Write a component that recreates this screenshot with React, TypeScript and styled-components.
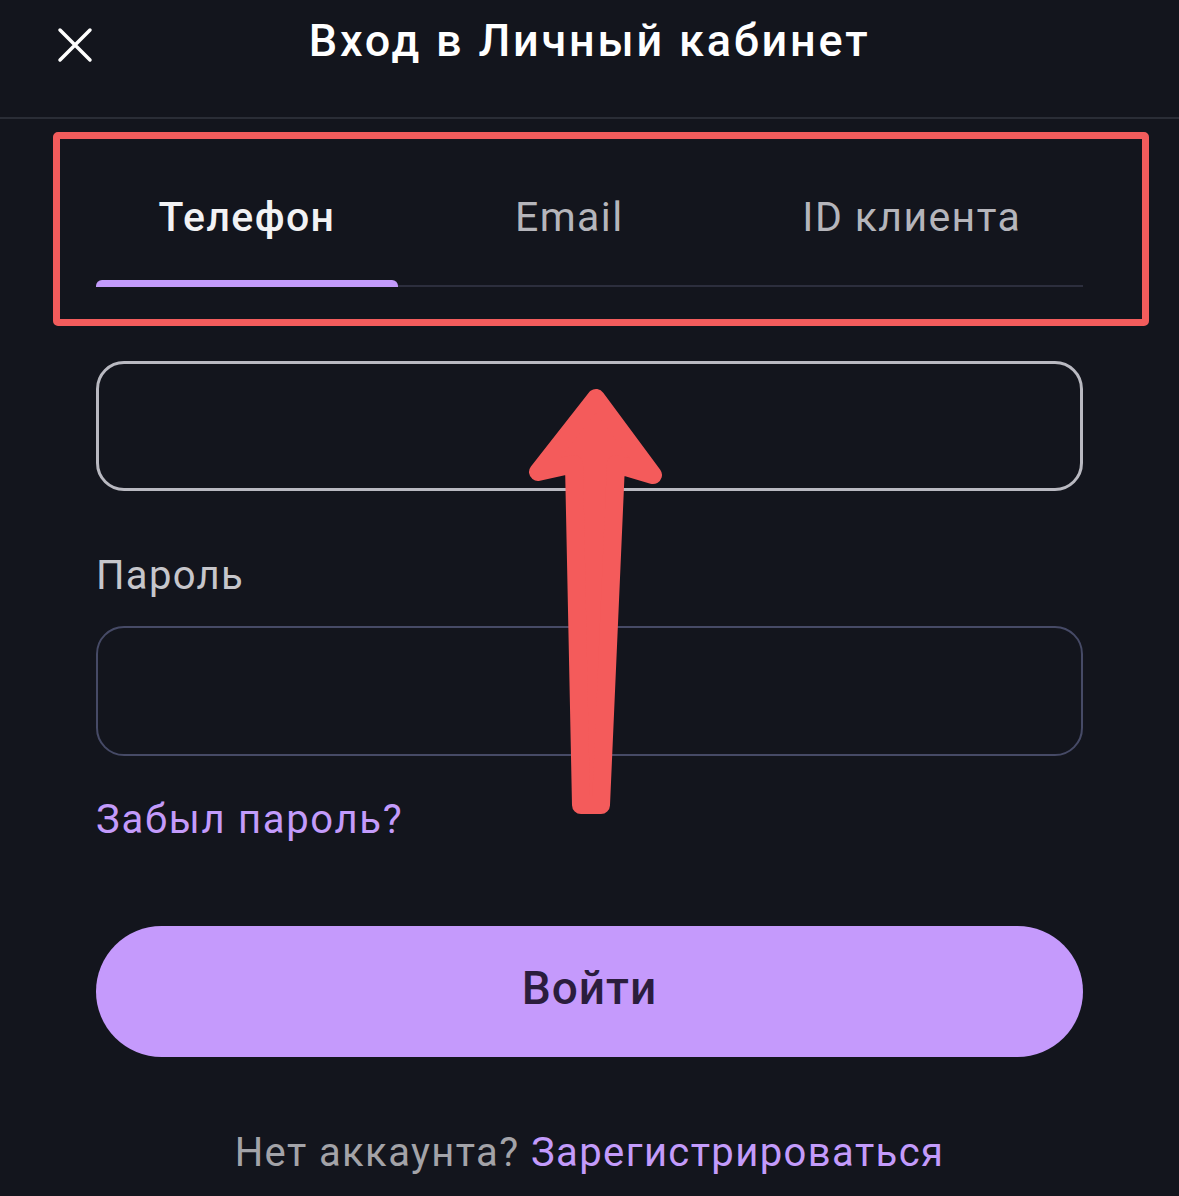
import styled, { createGlobalStyle } from 'styled-components';

const GlobalStyle = createGlobalStyle`
  html, body {
    margin: 0;
    padding: 0;
    background: #13151d;
  }
  * {
    box-sizing: border-box;
  }
`;

const Page = styled.div`
  position: relative;
  width: 1179px;
  height: 1196px;
  overflow: hidden;
  background: #13151d;
  font-family: Roboto, "Noto Sans", sans-serif;
  display: flex;
  flex-direction: column;
`;

const Header = styled.header`
  position: relative;
  height: 119px;
  border-bottom: 2px solid #2a2d36;
  display: flex;
  align-items: flex-start;
  justify-content: center;
  padding-top: 14px;
`;

const CloseButton = styled.button`
  position: absolute;
  left: 52px;
  top: 22px;
  width: 46px;
  height: 46px;
  padding: 0;
  border: none;
  background: transparent;
  display: flex;
  align-items: center;
  justify-content: center;
`;

const Title = styled.h1`
  margin: 0;
  color: #ffffff;
  font-size: 45px;
  line-height: 54px;
  font-weight: 500;
  letter-spacing: 2.8px;
`;

const Highlight = styled.div`
  margin: 13px 30px 0 53px;
  border: 7px solid #f25c5c;
  border-radius: 5px;
  padding: 0 59px 32px 36px;
`;

const TabRow = styled.div`
  display: flex;
  border-bottom: 2px solid #2c2e3d;
`;

const Tab = styled.button<{ active?: boolean; width?: number }>`
  position: relative;
  flex: ${(p) => (p.width ? `0 0 ${p.width}px` : '1 1 0')};
  height: 146px;
  padding: 10px 0 0;
  border: none;
  background: transparent;
  font-family: inherit;
  font-size: 41px;
  line-height: 50px;
  letter-spacing: 1.4px;
  font-weight: ${(p) => (p.active ? 500 : 400)};
  color: ${(p) => (p.active ? '#f2f2f4' : '#b5b5bb')};

  &::after {
    content: '';
    display: ${(p) => (p.active ? 'block' : 'none')};
    position: absolute;
    left: 0;
    right: 0;
    bottom: -2px;
    height: 7px;
    border-radius: 6px 6px 0 0;
    background: #c39bfb;
  }
`;

const Form = styled.div`
  display: flex;
  flex-direction: column;
  padding: 0 96px;
`;

const Field = styled.div<{ focused?: boolean; gap: number }>`
  margin-top: ${(p) => p.gap}px;
  height: 130px;
  border-radius: 28px;
  border: ${(p) => (p.focused ? '3px solid #b9b9c1' : '2.5px solid #464a66')};
`;

const Label = styled.div<{ gap: number }>`
  margin-top: ${(p) => p.gap}px;
  color: #c6c6cb;
  font-size: 40px;
  line-height: 50px;
  letter-spacing: 1.3px;
`;

const Link = styled.a`
  margin-top: 39px;
  color: #c39bfb;
  font-size: 40px;
  line-height: 50px;
  letter-spacing: 1.7px;
  text-decoration: none;
`;

const SubmitButton = styled.button`
  margin-top: 81px;
  height: 131px;
  padding-bottom: 8px;
  border: none;
  border-radius: 66px;
  background: #c59afc;
  color: #2b1d3d;
  font-family: inherit;
  font-size: 46px;
  font-weight: 500;
  letter-spacing: 1px;
`;

const Footer = styled.div`
  margin-top: 71px;
  text-align: center;
  font-size: 40px;
  line-height: 50px;
  letter-spacing: 1.4px;
  color: #a3a3a8;

  span {
    color: #c39bfb;
  }
`;

const ArrowMark = styled.svg`
  position: absolute;
  left: 520px;
  top: 380px;
`;

export default function App() {
  return (
    <Page>
      <GlobalStyle />
      <Header>
        <CloseButton aria-label="Закрыть">
          <svg width="36" height="36" viewBox="0 0 36 36">
            <path d="M3 3 L33 33 M33 3 L3 33" stroke="#ffffff" strokeWidth="3.5" strokeLinecap="round" />
          </svg>
        </CloseButton>
        <Title>Вход в Личный кабинет</Title>
      </Header>

      <Highlight>
        <TabRow>
          <Tab active width={302}>Телефон</Tab>
          <Tab>Email</Tab>
          <Tab>ID клиента</Tab>
        </TabRow>
      </Highlight>

      <Form>
        <Field focused gap={35} />
        <Label gap={60}>Пароль</Label>
        <Field gap={25} />
        <Link>Забыл пароль?</Link>
        <SubmitButton>Войти</SubmitButton>
        <Footer>
          Нет аккаунта? <span>Зарегистрироваться</span>
        </Footer>
      </Form>

      <ArrowMark width="150" height="450" viewBox="0 0 150 450">
        <path
          d="M76 18 L18 92 L54 84 L61 425 L81 425 L96 84 L133 95 Z"
          fill="#f45b5b"
          stroke="#f45b5b"
          strokeWidth="18"
          strokeLinejoin="round"
        />
      </ArrowMark>
    </Page>
  );
}
